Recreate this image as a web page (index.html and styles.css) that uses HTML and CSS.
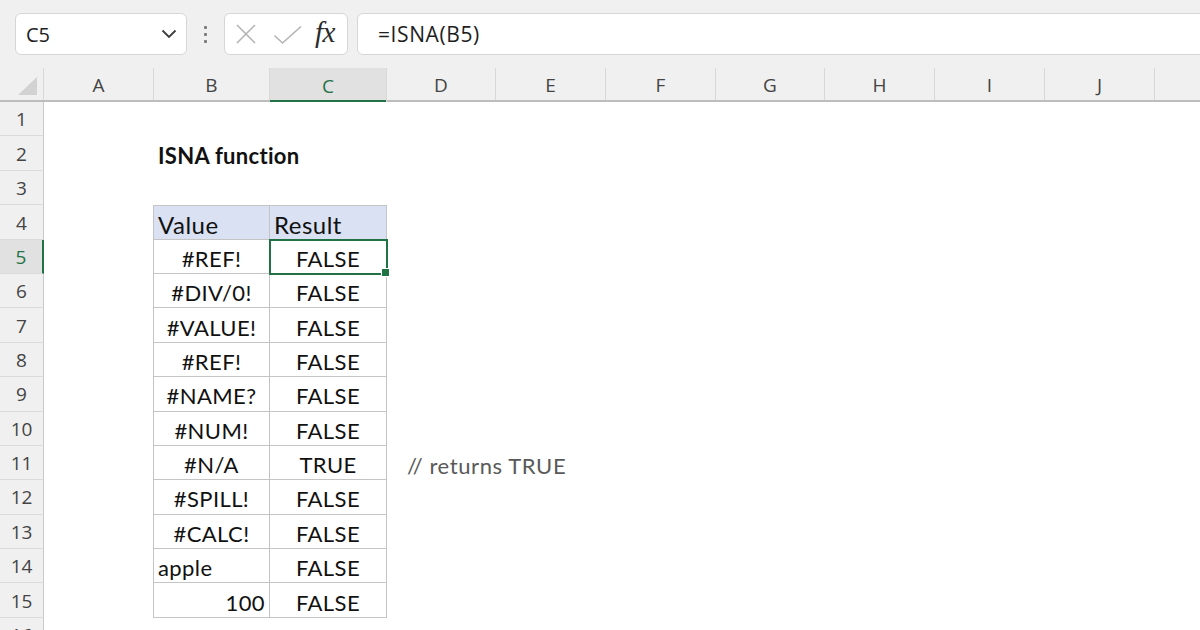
FILE: index.html
```html
<!DOCTYPE html>
<html>
<head>
<meta charset="utf-8">
<link rel="stylesheet" href="styles.css">
</head>
<body>
<div class="app">
  <div class="topbar">
    <div class="namebox">
      <span class="nb-text">C5</span>
      <svg class="chev" width="16" height="10" viewBox="0 0 16 10"><path d="M1.5 1.5 L8 8 L14.5 1.5" fill="none" stroke="#3c3c3c" stroke-width="1.8"/></svg>
    </div>
    <div class="dots"><i></i><i></i><i></i></div>
    <div class="fxbox">
      <svg class="ico-x" width="22" height="22" viewBox="0 0 22 22"><path d="M2 2 L20 20 M20 2 L2 20" stroke="#b4b4b4" stroke-width="1.6" fill="none"/></svg>
      <svg class="ico-check" width="30" height="20" viewBox="0 0 30 20"><path d="M1.5 10.5 L9.5 18 L28 1.5" stroke="#b4b4b4" stroke-width="1.6" fill="none"/></svg>
      <span class="fx">fx</span>
    </div>
    <div class="formula">=ISNA(B5)</div>
  </div>

  <div class="sheet">
    <div class="hrow">
      <div class="corner"><svg width="44" height="32" viewBox="0 0 44 32"><path d="M18 27 L37 27 L37 9 Z" fill="#d2d2d2"/></svg></div>
      <div class="ch">A</div>
      <div class="ch">B</div>
      <div class="ch sel">C</div>
      <div class="ch">D</div>
      <div class="ch">E</div>
      <div class="ch">F</div>
      <div class="ch">G</div>
      <div class="ch">H</div>
      <div class="ch">I</div>
      <div class="ch">J</div>
      <div class="ch last"></div>
    </div>

    <div class="row"><div class="rh">1</div></div>
    <div class="row"><div class="rh">2</div><div class="cell colB title">ISNA function</div></div>
    <div class="row"><div class="rh">3</div></div>
    <div class="row"><div class="rh">4</div><div class="cell colB t th first left">Value</div><div class="cell colC t th first">Result</div></div>
    <div class="row"><div class="rh sel">5</div><div class="cell colB t left ctr">#REF!</div><div class="cell colC t ctr active">FALSE<span class="handle"></span></div></div>
    <div class="row"><div class="rh">6</div><div class="cell colB t left ctr">#DIV/0!</div><div class="cell colC t ctr">FALSE</div></div>
    <div class="row"><div class="rh">7</div><div class="cell colB t left ctr">#VALUE!</div><div class="cell colC t ctr">FALSE</div></div>
    <div class="row"><div class="rh">8</div><div class="cell colB t left ctr">#REF!</div><div class="cell colC t ctr">FALSE</div></div>
    <div class="row"><div class="rh">9</div><div class="cell colB t left ctr">#NAME?</div><div class="cell colC t ctr">FALSE</div></div>
    <div class="row"><div class="rh">10</div><div class="cell colB t left ctr">#NUM!</div><div class="cell colC t ctr">FALSE</div></div>
    <div class="row"><div class="rh">11</div><div class="cell colB t left ctr">#N/A</div><div class="cell colC t ctr">TRUE</div><div class="cell colD note">// returns TRUE</div></div>
    <div class="row"><div class="rh">12</div><div class="cell colB t left ctr">#SPILL!</div><div class="cell colC t ctr">FALSE</div></div>
    <div class="row"><div class="rh">13</div><div class="cell colB t left ctr">#CALC!</div><div class="cell colC t ctr">FALSE</div></div>
    <div class="row"><div class="rh">14</div><div class="cell colB t left">apple</div><div class="cell colC t ctr">FALSE</div></div>
    <div class="row"><div class="rh">15</div><div class="cell colB t left rgt">100</div><div class="cell colC t ctr">FALSE</div></div>
    <div class="row"><div class="rh">16</div></div>
  </div>
</div>
</body>
</html>
```

FILE: styles.css
```css
* { box-sizing: border-box; }
html, body { margin: 0; padding: 0; }
body {
  width: 1200px;
  height: 630px;
  overflow: hidden;
  background: #ffffff;
  font-family: "Lato", "Liberation Sans", sans-serif;
}
.app { width: 1200px; height: 630px; overflow: hidden; }

/* ---------- formula bar ---------- */
.topbar {
  height: 68px;
  background: #f0f0f0;
  display: flex;
  align-items: flex-start;
  padding-top: 13px;
  padding-left: 15px;
}
.namebox {
  width: 172px;
  height: 42px;
  background: #fff;
  border: 1px solid #d6d6d6;
  border-radius: 6px;
  display: flex;
  align-items: center;
  justify-content: space-between;
  padding: 0 9px 0 10px;
}
.nb-text {
  font-family: "Open Sans", "Noto Sans", sans-serif;
  font-size: 20px;
  color: #222;
}
.chev { display: block; }
.dots {
  width: 37px;
  height: 42px;
  display: flex;
  flex-direction: column;
  align-items: center;
  justify-content: center;
  gap: 4px;
}
.dots i {
  display: block;
  width: 3px;
  height: 3px;
  border-radius: 1px;
  background: #7a7a7a;
}
.fxbox {
  width: 124px;
  height: 42px;
  background: #fff;
  border: 1px solid #d6d6d6;
  border-radius: 6px;
  display: flex;
  align-items: center;
  padding-left: 10px;
}
.ico-x { display: block; }
.ico-check { display: block; margin-left: 16px; margin-top: 2px; }
.fx {
  font-family: "Liberation Serif", "DejaVu Serif", serif;
  font-style: italic;
  font-size: 29px;
  color: #2b2b2b;
  margin-left: 12px;
  margin-top: -4px;
  letter-spacing: -0.5px;
}
.formula {
  flex: 1;
  margin-left: 9px;
  height: 42px;
  margin-right: -20px;
  background: #fff;
  border: 1px solid #d6d6d6;
  border-radius: 6px;
  display: flex;
  align-items: center;
  padding-left: 20px;
  font-family: "Open Sans", "Noto Sans", sans-serif;
  font-size: 21px;
  letter-spacing: 0.6px;
  color: #1e1e1e;
}

/* ---------- sheet ---------- */
.sheet { background: #fff; }
.hrow, .row {
  display: grid;
  grid-template-columns: 44px 110px 116px 117px 109px 110px 110px 109px 110px 110px 110px 1fr;
}
.hrow {
  height: 34px;
  background: #f0f0f0;
  border-bottom: 2px solid #bdbdbd;
}
.corner { border-right: 1px solid #d8d8d8; }
.corner svg { display: block; }
.ch {
  display: flex;
  align-items: center;
  justify-content: center;
  border-right: 1px solid #d8d8d8;
  font-family: "Open Sans", "Noto Sans", sans-serif;
  font-size: 19px;
  color: #444;
  padding-top: 1px;
}
.ch.sel {
  background: #e1e1e1;
  color: #217346;
  box-shadow: inset 0 -2px 0 #217346;
  margin-bottom: -2px;
}
.ch.last { border-right: none; }

.row { height: 34.4px; }
.rh {
  grid-column: 1;
  background: #f0f0f0;
  border-right: 1px solid #c9c9c9;
  border-bottom: 1px solid #dadada;
  display: flex;
  align-items: center;
  justify-content: center;
  font-family: "Open Sans", "Noto Sans", sans-serif;
  font-size: 19px;
  color: #444;
  padding-top: 1px;
}
.rh.sel {
  background: #e1e1e1;
  color: #217346;
  border-right: 2px solid #217346;
}

.cell {
  grid-row: 1;
  display: flex;
  align-items: center;
  font-size: 22px;
  letter-spacing: 0.4px;
  color: #111;
  padding: 4px 4px 0 4px;
  white-space: nowrap;
  position: relative;
}
.colB { grid-column: 3; }
.colC { grid-column: 4; }
.colD { grid-column: 5 / span 3; }

.title { font-weight: 700; font-size: 22px; letter-spacing: 0.3px; }
.note { color: #595959; padding-left: 20px; letter-spacing: 0.6px; }

.t {
  border-right: 1px solid #c4c4c4;
  border-bottom: 1px solid #c4c4c4;
}
.t.left { border-left: 1px solid #c4c4c4; }
.t.first { border-top: 1px solid #c4c4c4; }
.th { background: #d9e1f2; font-size: 24px; letter-spacing: 0.5px; }
.ctr { justify-content: center; }
.rgt { justify-content: flex-end; }
.colB.t { margin-left: -1px; }

.active {
  outline: 2px solid #217346;
  outline-offset: -1px;
  z-index: 2;
}
.handle {
  position: absolute;
  right: -4px;
  bottom: -4px;
  width: 7px;
  height: 7px;
  background: #217346;
  border: 1px solid #fff;
  box-sizing: content-box;
}
```
